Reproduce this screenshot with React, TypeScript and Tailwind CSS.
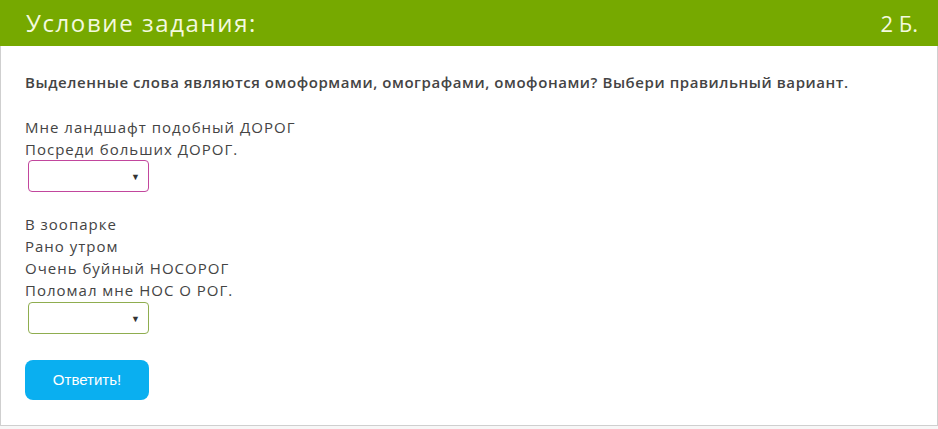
import React from "react";

function Sel({ color }: { color: string }) {
  return (
    <div
      className={`ml-[3px] flex h-[32px] w-[121px] items-center justify-end rounded-[4px] border bg-white pr-[8px] ${color}`}
    >
      <span className="text-[9px] leading-none tracking-normal text-[#333]">▼</span>
    </div>
  );
}

export default function App() {
  return (
    <div className="min-h-[429px] w-[938px] bg-[#f7f7f7]" style={{ fontFamily: '"Open Sans", "Noto Sans", sans-serif' }}>
      <div className="border-b border-l border-r border-[#cfcfcf] bg-white">
        <div className="-mx-px flex h-[46px] items-center justify-between bg-[#76a900] pl-[26px] pr-[20px] text-[#f3f9df]">
          <span className="text-[24px] leading-none tracking-[1.6px]">Условие задания:</span>
          <span className="text-[22px] leading-none">2 Б.</span>
        </div>
        <div className="px-[24px] pb-[25px] pt-[25px] text-[15px] leading-[22px] text-[#444]">
          <p className="font-semibold tracking-[0.57px]">
            Выделенные слова являются омоформами, омографами, омофонами? Выбери правильный вариант.
          </p>
          <div className="mt-[23px] tracking-[1px]">
            <p>Мне ландшафт подобный ДОРОГ</p>
            <p>Посреди больших ДОРОГ.</p>
            <Sel color="border-[#c2469d]" />
          </div>
          <div className="mt-[21px] tracking-[1px]">
            <p>В зоопарке</p>
            <p>Рано утром</p>
            <p>Очень буйный НОСОРОГ</p>
            <p>Поломал мне НОС О РОГ.</p>
            <div className="mt-[1px]">
              <Sel color="border-[#8fad4f]" />
            </div>
          </div>
          <button
            className="mt-[26px] flex h-[40px] w-[124px] items-center justify-center rounded-[8px] bg-[#0aaff0] text-[15px] text-white"
            style={{ fontFamily: '"Liberation Sans", Arial, sans-serif' }}
          >
            Ответить!
          </button>
        </div>
      </div>
    </div>
  );
}
